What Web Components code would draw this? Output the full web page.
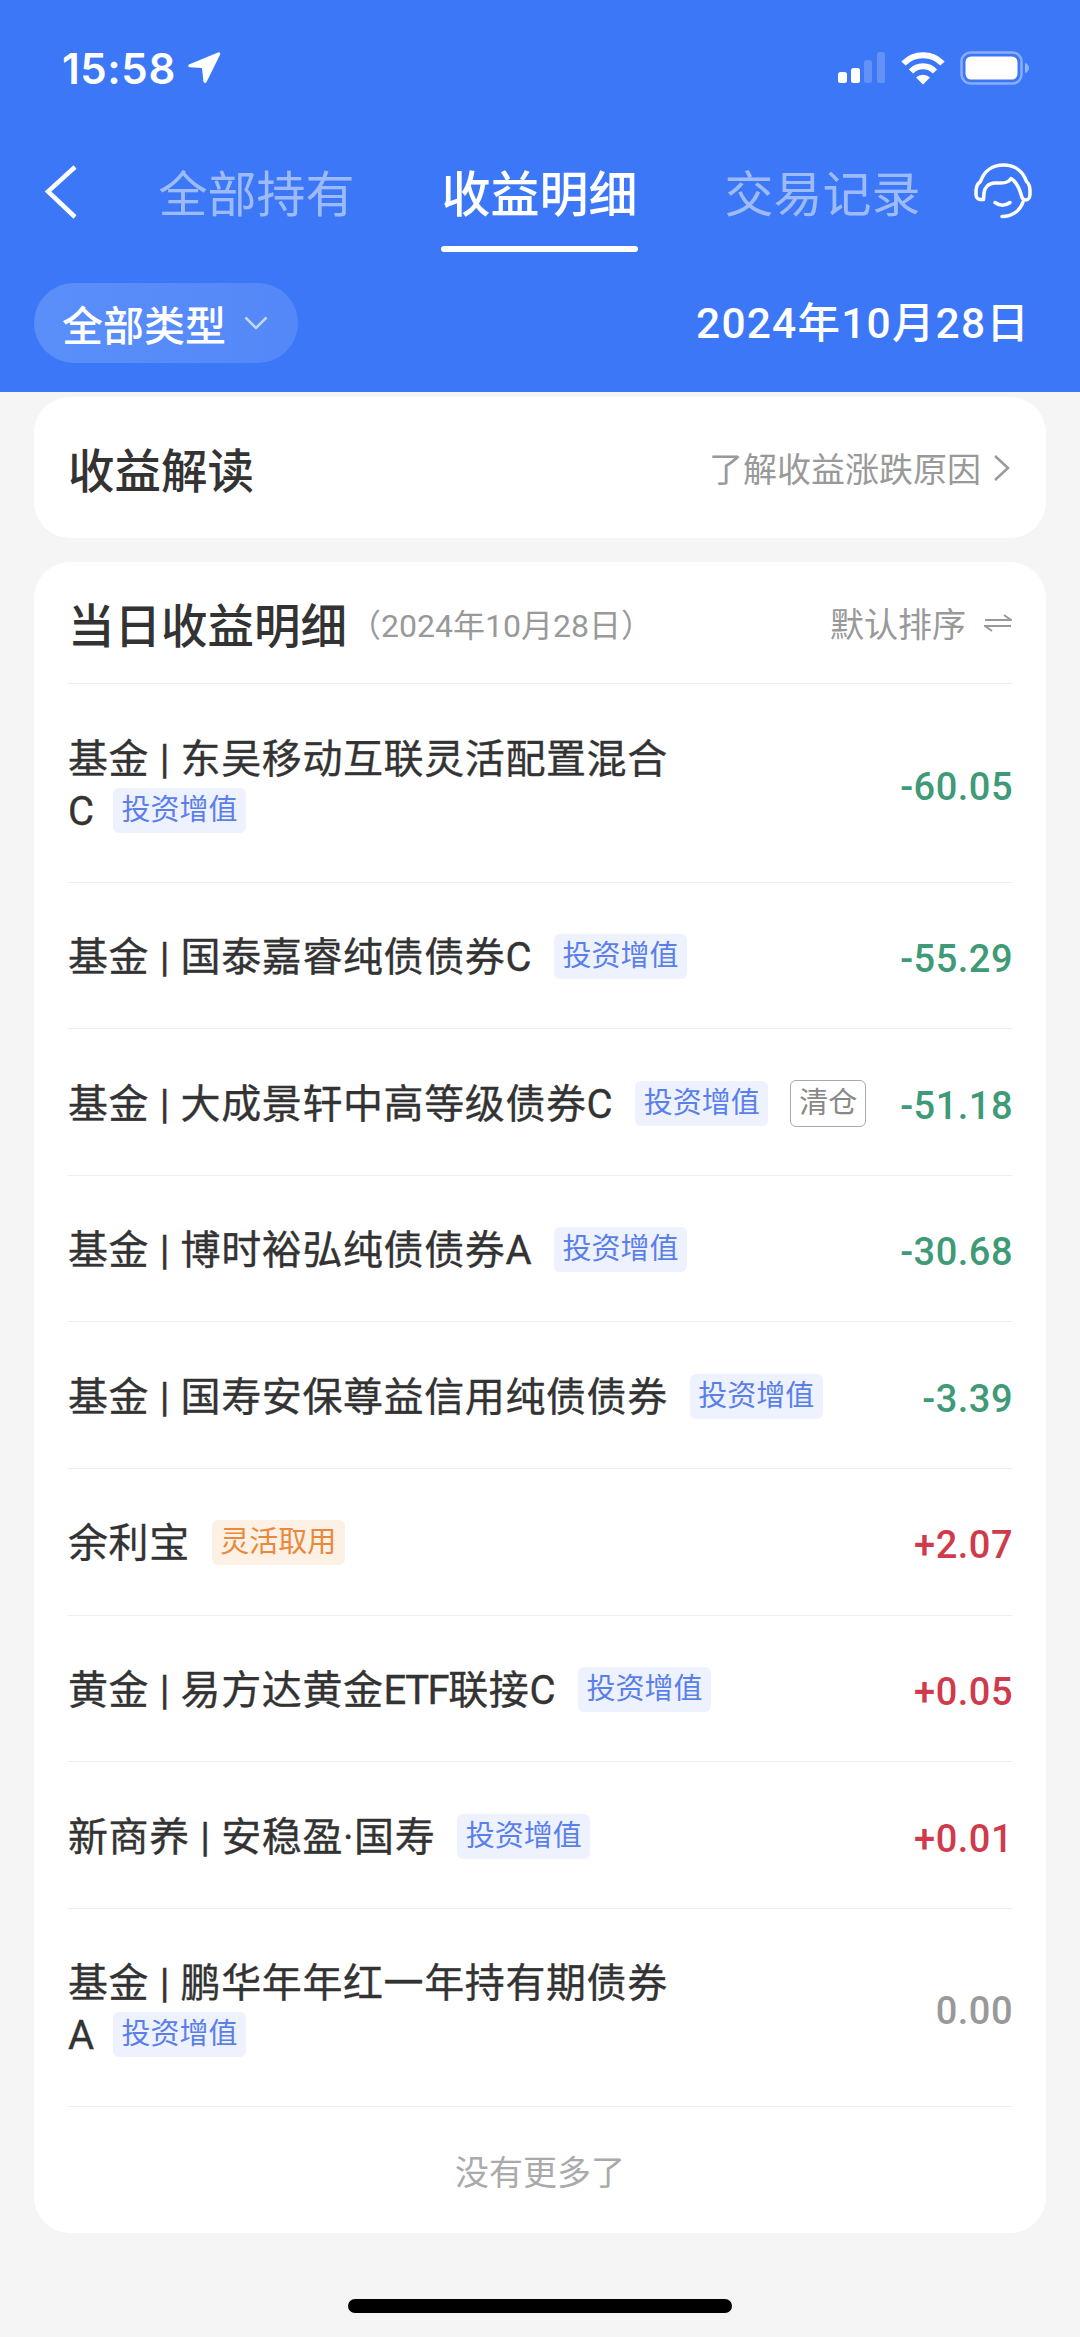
<!DOCTYPE html>
<html lang="zh-CN">
<head>
<meta charset="utf-8">
<title>收益明细</title>
<style>
  html, body { margin: 0; padding: 0; background: #f5f5f5; }
  body {
    width: 1080px;
    height: 2337px;
    overflow: hidden;
    font-family: Roboto, "Noto Sans CJK SC", sans-serif;
  }
  /* latin in the names is narrower than Roboto in the screenshot */
  .narrow { letter-spacing: -1.500px; }
  .narrow_end { letter-spacing: -3px; }
</style>
</head>
<body>
<income-page>
  <app-header slot="header"></app-header>

  <insight-card></insight-card>

  <detail-card>
    <income-row value="-60.05" tone="down">基金 | 东吴移动互联灵活配置混合<br><span class="narrow_end">C</span><type-tag>投资增值</type-tag></income-row>
    <income-row value="-55.29" tone="down">基金 | 国泰嘉睿纯债债券C<type-tag>投资增值</type-tag></income-row>
    <income-row value="-51.18" tone="down">基金 | 大成景轩中高等级债券C<type-tag>投资增值</type-tag><type-tag kind="outline">清仓</type-tag></income-row>
    <income-row value="-30.68" tone="down">基金 | 博时裕弘纯债债券A<type-tag>投资增值</type-tag></income-row>
    <income-row value="-3.39" tone="down">基金 | 国寿安保尊益信用纯债债券<type-tag>投资增值</type-tag></income-row>
    <income-row value="+2.07" tone="up">余利宝<type-tag kind="orange">灵活取用</type-tag></income-row>
    <income-row value="+0.05" tone="up">黄金 | 易方达黄金<span class="narrow">ETF</span>联接C<type-tag>投资增值</type-tag></income-row>
    <income-row value="+0.01" tone="up">新商养 | 安稳盈·国寿<type-tag>投资增值</type-tag></income-row>
    <income-row value="0.00" tone="flat">基金 | 鹏华年年红一年持有期债券<br><span class="narrow_end">A</span><type-tag>投资增值</type-tag></income-row>
  </detail-card>
</income-page>

<script>
const pageTemplate = document.createElement("template");
pageTemplate.innerHTML = `
<style>
  :host {
    display: flex;
    flex-direction: column;
    height: 2337px;
    background: #f5f5f5;
  }
  .content {
    display: flex;
    flex-direction: column;
    gap: 24px;
    padding: 5px 34px 0;
  }
  .home_bar {
    width: 384px;
    height: 14px;
    margin: 66px auto 0;
    border-radius: 7px;
    background: #000;
  }
</style>
<slot name="header"></slot>
<div class="content"><slot></slot></div>
<div class="home_bar"></div>
`;

const headerTemplate = document.createElement("template");
headerTemplate.innerHTML = `
<style>
  :host {
    display: block;
    background: #3b77f6;
    color: #fff;
  }
  .status {
    display: flex;
    align-items: center;
    height: 136px;
    padding: 0 50px 0 62px;
    box-sizing: border-box;
  }
  .time {
    font-family: Inter, Roboto, sans-serif;
    font-size: 42px;
    font-weight: 600;
    letter-spacing: 0.6px;
  }
  .location { margin-left: 11px; }
  .status_right {
    display: flex;
    align-items: center;
    gap: 14px;
    margin-left: auto;
  }
  .nav {
    display: flex;
    align-items: flex-start;
    height: 116px;
    padding: 0 48px 0 45px;
  }
  .nav_btn {
    flex: none;
    width: 58px;
    height: 60px;
    margin-top: 26px;
  }
  .tabs {
    flex: 1;
    display: flex;
    justify-content: center;
    gap: 87px;
    padding-left: 2px;
  }
  .tab {
    display: flex;
    flex-direction: column;
    padding-top: 30px;
    font-size: 49px;
    line-height: 60px;
    color: rgba(255, 255, 255, 0.5);
  }
  .tab::after {
    content: "";
    height: 6px;
    margin-top: 20px;
    border-radius: 3px;
  }
  .tab.active {
    color: #fff;
    font-weight: 500;
  }
  .tab.active::after { background: #fff; }
  .filters {
    display: flex;
    align-items: center;
    justify-content: space-between;
    padding: 31px 50px 29px 34px;
  }
  .pill {
    display: flex;
    align-items: center;
    gap: 18px;
    width: 264px;
    height: 80px;
    padding-left: 28px;
    box-sizing: border-box;
    border-radius: 40px;
    background: linear-gradient(90deg, #5a8ef9, #5488f8);
    font-size: 41px;
    font-weight: 500;
  }
  .date {
    padding-bottom: 8px;
    font-size: 42.500px;
    font-weight: 500;
    letter-spacing: 1.200px;
  }
</style>
<div class="status">
  <span class="time">15:58</span>
  <svg class="location" width="34" height="34" viewBox="0 0 34 34"><path d="M31 1.500 2.500 13.200c-1.800.8-1.300 3 .6 3.100L15 17l1.400 13.300c.2 2 2.500 2.300 3.300.5L33 3.800c.8-1.700-.4-3-2-2.300z" fill="#fff"/></svg>
  <div class="status_right">
    <svg width="49" height="32" viewBox="0 0 49 32">
      <rect x="1" y="20" width="9" height="11" rx="2.500" fill="#fff"/>
      <rect x="14" y="16" width="9" height="15" rx="2.500" fill="#fff"/>
      <rect x="27" y="8" width="8" height="23" rx="2.500" fill="#fff" fill-opacity=".2"/>
      <rect x="40" y="0" width="8" height="31" rx="2.500" fill="#fff" fill-opacity=".2"/>
    </svg>
    <svg width="46" height="34" viewBox="0 0 46 34" fill="none" stroke="#fff" stroke-width="6">
      <path d="M3.500 12.500a27 27 0 0 1 39 0"/>
      <path d="M11 20.500a16.500 16.500 0 0 1 24 0"/>
      <path d="M16 26.500a10 10 0 0 1 14 0L23 33.500z" fill="#fff" stroke="none"/>
    </svg>
    <svg width="70" height="34" viewBox="0 0 70 34">
      <rect x="1.500" y="1.500" width="60" height="31" rx="9" fill="none" stroke="#fff" stroke-opacity=".4" stroke-width="2.500"/>
      <rect x="5.500" y="5.500" width="52" height="23" rx="5.500" fill="#fff"/>
      <path d="M65 12c2.500.8 4 2.800 4 5s-1.500 4.200-4 5z" fill="#fff" fill-opacity=".45"/>
    </svg>
  </div>
</div>
<div class="nav">
  <svg class="nav_btn" viewBox="0 0 58 60" fill="none" stroke="#fff" stroke-width="4.500"><path d="M30 5 3 29.500 30 55"/></svg>
  <div class="tabs">
    <div class="tab">全部持有</div>
    <div class="tab active">收益明细</div>
    <div class="tab">交易记录</div>
  </div>
  <svg class="nav_btn" viewBox="0 0 58 60" fill="none" stroke="#fff" stroke-width="3.500" stroke-linecap="round" stroke-linejoin="round">
    <path d="M9.500 37.500H6C3.500 37.500 2 35 2 32V29C2 25 3.500 21.500 6.500 19.500C10 9 18.500 3 29.500 3S49 9 52.500 19.500C55 21.500 56 25 56 29V32C56 35 54.500 38 52 38C49.500 38 48 36.500 47.500 34C46 28 44 21 37 16.500C35 20 32 21 27 21H21C14 21 10.500 26 10 31Z"/>
    <path d="M21 40.500Q28.500 46 36 40.500"/>
    <path d="M49 40C46 49 38 54.500 28 54.500"/>
  </svg>
</div>
<div class="filters">
  <div class="pill">
    <span>全部类型</span>
    <svg width="24" height="14" viewBox="0 0 24 14" fill="none" stroke="#fff" stroke-opacity=".65" stroke-width="2.500"><path d="M1.500 1.500 12 12 22.500 1.500"/></svg>
  </div>
  <div class="date">2024年10月28日</div>
</div>
`;

const insightTemplate = document.createElement("template");
insightTemplate.innerHTML = `
<style>
  :host {
    display: flex;
    align-items: center;
    justify-content: space-between;
    height: 141px;
    padding: 0 36px 0 34px;
    border-radius: 36px;
    background: #fff;
  }
  .title {
    font-size: 46.500px;
    font-weight: 500;
    color: #333;
  }
  .link {
    display: flex;
    align-items: center;
    gap: 12px;
    font-size: 34px;
    color: #999;
  }
</style>
<span class="title">收益解读</span>
<span class="link">了解收益涨跌原因
  <svg width="17" height="28" viewBox="0 0 17 28" fill="none" stroke="#999" stroke-width="2.500"><path d="M2 2l13 12L2 26"/></svg>
</span>
`;

const detailTemplate = document.createElement("template");
detailTemplate.innerHTML = `
<style>
  :host {
    display: block;
    padding: 0 34px;
    border-radius: 36px;
    background: #fff;
  }
  .head {
    display: flex;
    align-items: center;
    height: 121px;
    border-bottom: 1px solid #eee;
  }
  .title {
    font-size: 46.500px;
    font-weight: 500;
    color: #333;
  }
  .sub {
    margin-left: 2px;
    font-size: 32px;
    color: #999;
  }
  .sort {
    display: flex;
    align-items: center;
    gap: 18px;
    margin-left: auto;
    font-size: 34px;
    color: #999;
  }
  .end {
    height: 126px;
    display: flex;
    align-items: center;
    justify-content: center;
    font-size: 34px;
    color: #aaa;
  }
</style>
<div class="head">
  <span class="title">当日收益明细</span>
  <span class="sub">（2024年10月28日）</span>
  <span class="sort">默认排序
    <svg width="28" height="18" viewBox="0 0 28 18" fill="none" stroke="#999" stroke-width="2"><path d="M1 6h26L20 1M27 12H1l7 5"/></svg>
  </span>
</div>
<slot></slot>
<div class="end">没有更多了</div>
`;

const rowTemplate = document.createElement("template");
rowTemplate.innerHTML = `
<style>
  :host {
    display: flex;
    align-items: center;
    justify-content: space-between;
    padding: 49.500px 0 44.100px;
    border-bottom: 1px solid #eee;
  }
  .name {
    font-size: 40px;
    line-height: 52px;
    letter-spacing: 0.6px;
    color: #333;
    -webkit-text-stroke: 0.35px #333;
  }
  .value {
    flex: none;
    margin-right: -1px;
    padding-top: 2px;
    font-size: 38px;
    font-weight: 500;
    letter-spacing: 0.5px;
  }
  :host([tone="down"]) .value { color: #3f9a78; }
  :host([tone="up"]) .value { color: #d03b4b; }
  :host([tone="flat"]) .value { color: #999; }
</style>
<div class="name"><slot></slot></div>
<span class="value"></span>
`;

const tagTemplate = document.createElement("template");
tagTemplate.innerHTML = `
<style>
  :host {
    display: inline-block;
    height: 45px;
    margin-left: 22px;
    padding: 0 8.500px;
    border-radius: 6px;
    background: #eef2fe;
    color: #5b7fea;
    font-size: 29px;
    line-height: 45px;
    letter-spacing: 0;
    vertical-align: 5px;
    -webkit-text-stroke: 0;
  }
  :host([kind="orange"]) {
    background: #fdf0e4;
    color: #e8893c;
  }
  :host([kind="outline"]) {
    height: 47px;
    padding: 0 8px;
    box-sizing: border-box;
    border: 1px solid #aaa;
    background: #fff;
    color: #888;
  }
</style>
<slot></slot>
`;

class IncomePage extends HTMLElement {
  constructor() {
    super();
    this.attachShadow({ mode: "open" }).appendChild(pageTemplate.content.cloneNode(true));
  }
}

class AppHeader extends HTMLElement {
  constructor() {
    super();
    this.attachShadow({ mode: "open" }).appendChild(headerTemplate.content.cloneNode(true));
  }
}

class InsightCard extends HTMLElement {
  constructor() {
    super();
    this.attachShadow({ mode: "open" }).appendChild(insightTemplate.content.cloneNode(true));
  }
}

class DetailCard extends HTMLElement {
  constructor() {
    super();
    this.attachShadow({ mode: "open" }).appendChild(detailTemplate.content.cloneNode(true));
  }
}

class IncomeRow extends HTMLElement {
  constructor() {
    super();
    this.attachShadow({ mode: "open" }).appendChild(rowTemplate.content.cloneNode(true));
  }

  connectedCallback() {
    this.shadowRoot.querySelector(".value").textContent = this.getAttribute("value");
  }
}

class TypeTag extends HTMLElement {
  constructor() {
    super();
    this.attachShadow({ mode: "open" }).appendChild(tagTemplate.content.cloneNode(true));
  }
}

customElements.define("income-page", IncomePage);
customElements.define("app-header", AppHeader);
customElements.define("insight-card", InsightCard);
customElements.define("detail-card", DetailCard);
customElements.define("income-row", IncomeRow);
customElements.define("type-tag", TypeTag);
</script>
</body>
</html>
